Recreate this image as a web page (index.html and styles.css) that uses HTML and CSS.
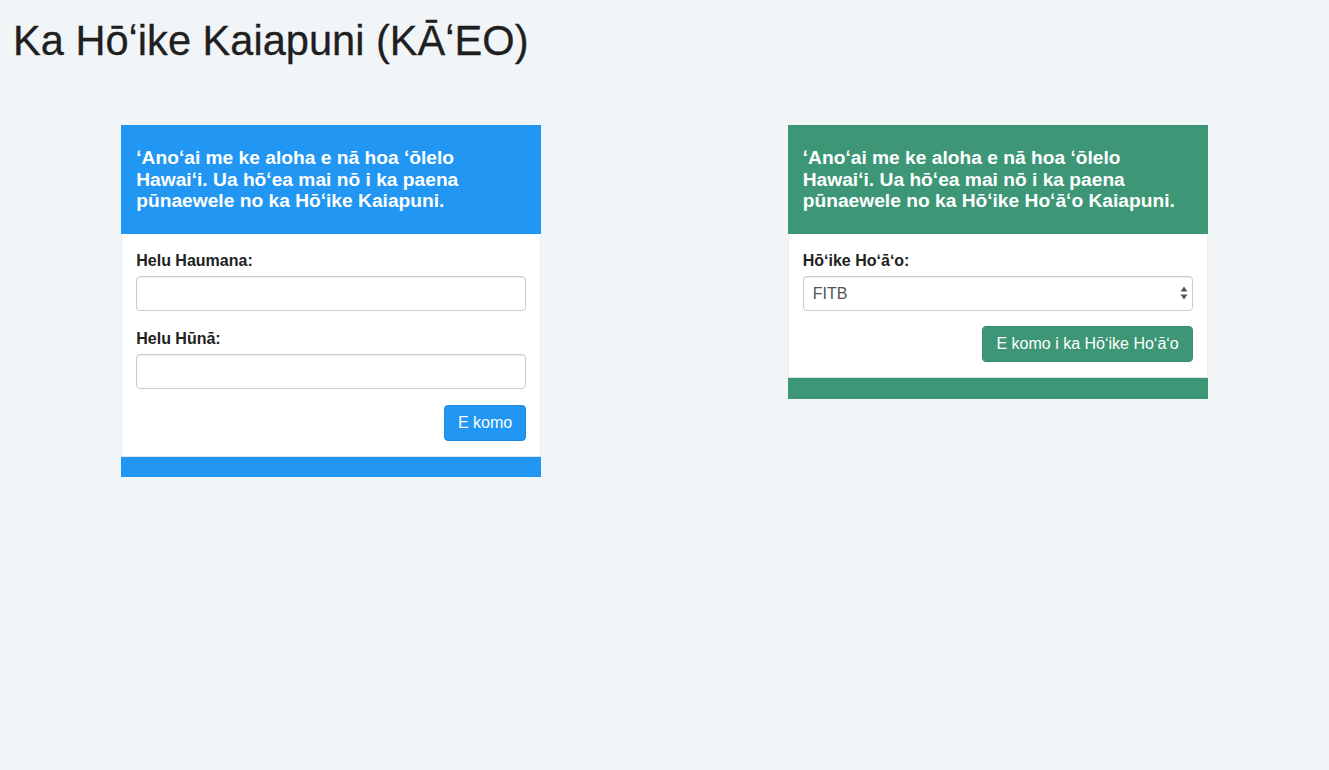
FILE: index.html
```html
<!DOCTYPE html>
<html lang="haw">
<head>
<meta charset="utf-8">
<title>Ka Hōʻike Kaiapuni (KĀʻEO)</title>
<link rel="stylesheet" href="styles.css">
</head>
<body>
<div class="page">
  <h1 class="title">Ka Hōʻike Kaiapuni (KĀʻEO)</h1>
  <div class="columns">
    <div class="col">
      <div class="card card-blue">
        <div class="card-head">ʻAnoʻai me ke aloha e nā hoa ʻōlelo Hawaiʻi. Ua hōʻea mai nō i ka paena pūnaewele no ka Hōʻike Kaiapuni.</div>
        <form class="card-body">
          <div class="field">
            <label class="label" for="haumana">Helu Haumana:</label>
            <input class="control" id="haumana" type="text">
          </div>
          <div class="field field-last-blue">
            <label class="label" for="huna">Helu Hūnā:</label>
            <input class="control" id="huna" type="password">
          </div>
          <div class="actions">
            <button class="btn btn-blue" type="button">E komo</button>
          </div>
        </form>
        <div class="card-foot"></div>
      </div>
    </div>
    <div class="col">
      <div class="card card-green">
        <div class="card-head">ʻAnoʻai me ke aloha e nā hoa ʻōlelo Hawaiʻi. Ua hōʻea mai nō i ka paena pūnaewele no ka Hōʻike Hoʻāʻo Kaiapuni.</div>
        <form class="card-body">
          <div class="field field-last-green">
            <label class="label" for="hoao">Hōʻike Hoʻāʻo:</label>
            <div class="select-wrap">
              <select class="control select" id="hoao">
                <option>FITB</option>
              </select>
              <svg class="select-arrows" width="8" height="14" viewBox="0 0 8 14"><path d="M4 0.5 L7.5 5.5 H0.5 Z" fill="#555"/><path d="M4 13.5 L7.5 8.5 H0.5 Z" fill="#555"/></svg>
            </div>
          </div>
          <div class="actions">
            <button class="btn btn-green" type="button">E komo i ka Hōʻike Hoʻāʻo</button>
          </div>
        </form>
        <div class="card-foot"></div>
      </div>
    </div>
  </div>
</div>
</body>
</html>
```
FILE: styles.css
```css
html, body {
  margin: 0;
  padding: 0;
  background: #f2f5f8;
}
body {
  font-family: "Liberation Sans", Arial, Helvetica, sans-serif;
  color: #222;
  font-size: 16px;
}
.page {
  padding: 0 0 0 13px;
}
.title {
  margin: 18px 0 0 0;
  font-size: 41.6px;
  line-height: 46px;
  font-weight: 400;
  color: #1f1f1f;
  -webkit-text-stroke: 0.3px #1f1f1f;
}
.columns {
  display: grid;
  grid-template-columns: 1fr 1fr;
  column-gap: 4px;
  align-items: start;
  margin-left: -13px;
  margin-top: 61px;
}
.col {
  display: flex;
  justify-content: center;
  align-items: flex-start;
}
.card {
  width: 420px;
  background: #fff;
}
.card-head {
  color: #fff;
  font-weight: 700;
  font-size: 19.2px;
  line-height: 21.7px;
  padding: 22px 15px 22px 15px;
}
.card-blue .card-head, .card-blue .card-foot { background: #2196f3; }
.card-green .card-head, .card-green .card-foot { background: #3d9776; }
.card-body {
  margin: 0;
  padding: 17px 14px 15px 14px;
  border-left: 1px solid #eceff2;
  border-right: 1px solid #eceff2;
  display: flex;
  flex-direction: column;
}
.field {
  display: flex;
  flex-direction: column;
  margin-bottom: 18px;
}
.field-last-blue {
  margin-bottom: 16px;
}
.field-last-green {
  margin-bottom: 15px;
}
.label {
  font-weight: 700;
  font-size: 16px;
  line-height: 20px;
  margin-bottom: 5px;
  color: #222;
}
.control {
  box-sizing: border-box;
  height: 35px;
  width: 100%;
  border: 1px solid #ccc;
  border-radius: 4px;
  background: #fff;
  box-shadow: inset 0 1px 1px rgba(0,0,0,0.075);
  font-family: inherit;
  font-size: 16px;
  color: #555;
  padding: 0 9px;
  margin: 0;
}
.select-wrap {
  position: relative;
}
.select {
  appearance: none;
  -webkit-appearance: none;
}
.select-arrows {
  position: absolute;
  right: 5px;
  top: 10px;
  pointer-events: none;
}
.actions {
  display: flex;
  justify-content: flex-end;
}
.btn {
  height: 36px;
  padding: 0 13px;
  border: 1px solid transparent;
  border-radius: 4px;
  color: #fff;
  font-family: inherit;
  font-size: 16px;
  cursor: pointer;
}
.btn-blue {
  background: #2196f3;
  border-color: #1e8ae0;
}
.btn-green {
  background: #3d9776;
  border-color: #3a8f70;
}
.card-foot {
  height: 20px;
  border-top: 1px solid #dfe3e8;
}
.card-green .card-foot {
  height: 21px;
}
```
